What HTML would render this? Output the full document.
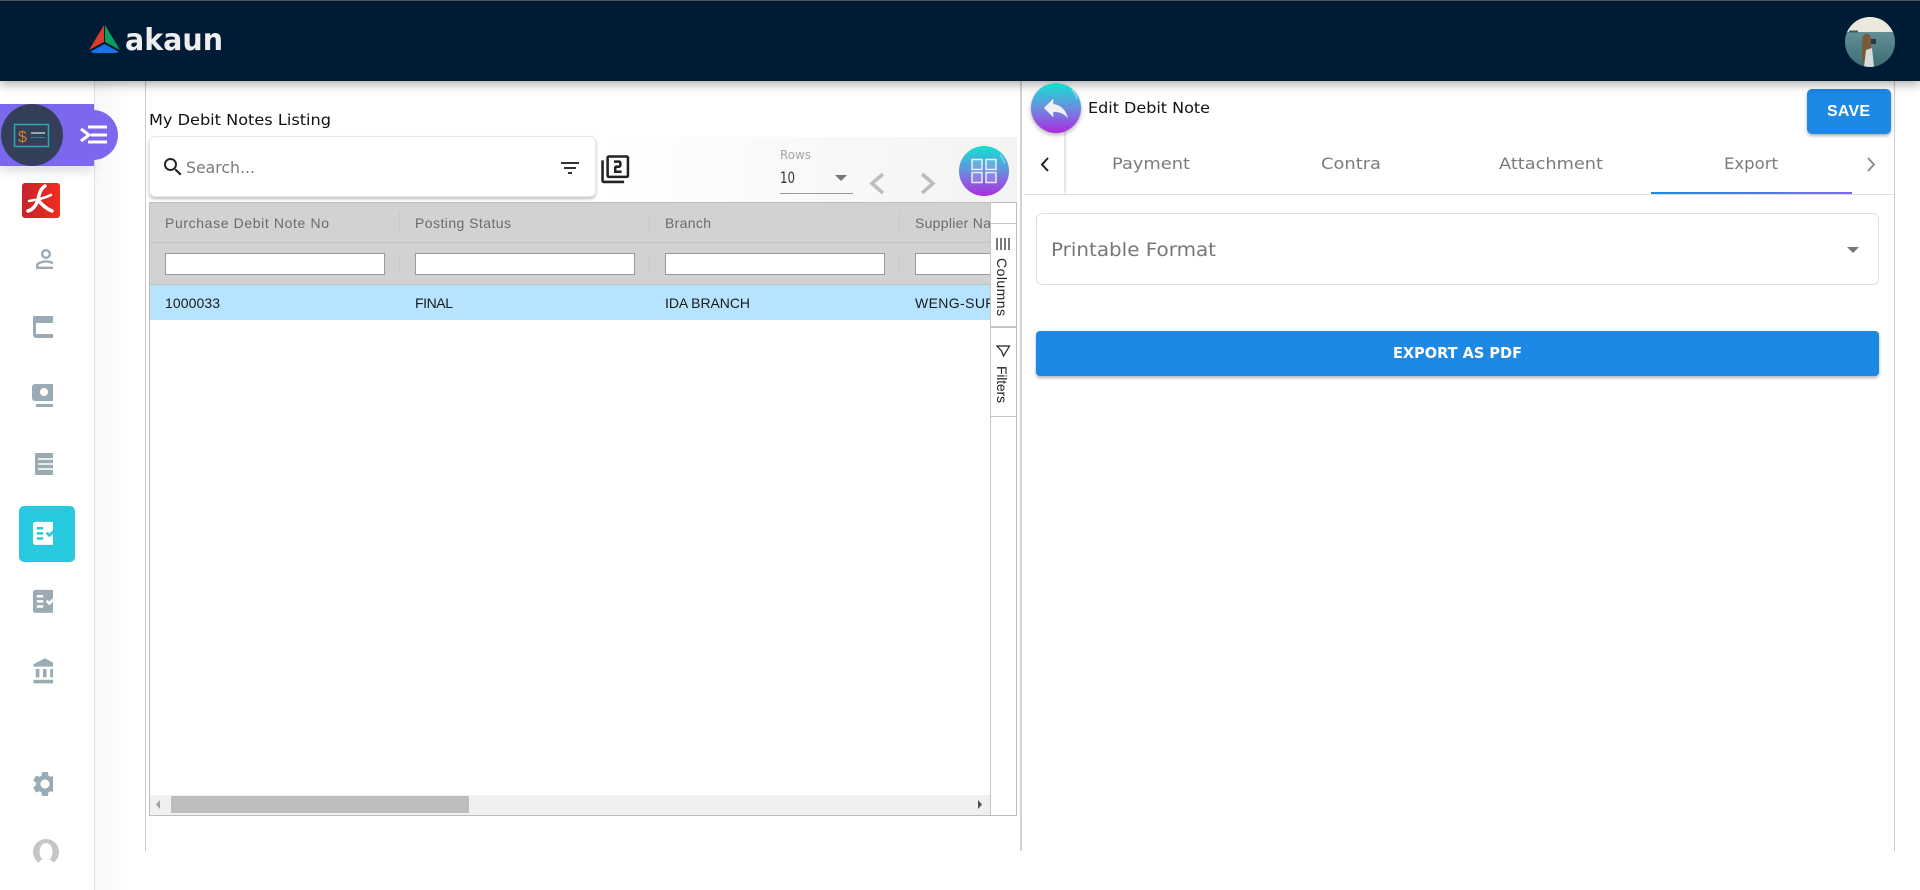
<!DOCTYPE html>
<html lang="en"><head><meta charset="utf-8"><title>Edit Debit Note</title>
<style>
html,body{margin:0;padding:0;width:1920px;height:890px;overflow:hidden;background:#fff;font-family:"Liberation Sans",sans-serif}
.a{position:absolute;box-sizing:border-box}
svg text{font-family:"Liberation Sans",sans-serif}
svg .p{font-family:"DejaVu Sans",sans-serif}
</style></head><body>
<div class="a" style="left:95px;top:81px;width:50px;height:809px;background:linear-gradient(90deg,#f8f8f8,#fff 70%)"></div>
<div class="a" style="left:94px;top:81px;width:1px;height:809px;background:#e2e2e2"></div>
<div class="a" style="left:145px;top:81px;width:1px;height:770px;background:#ccc"></div>
<div class="a" style="left:1020px;top:81px;width:2px;height:770px;background:#d2d2d2"></div>
<div class="a" style="left:1894px;top:81px;width:1px;height:770px;background:#ccc"></div>
<div class="a" style="left:600px;top:137px;width:417px;height:65px;background:linear-gradient(90deg,#fff,#f3f3f3)"></div>
<!-- sidebar -->
<div class="a" style="left:0;top:104px;width:94px;height:62px;background:#7b68ee;box-shadow:0 6px 10px rgba(0,0,0,.12)"></div>
<div class="a" style="left:60px;top:110px;width:58px;height:50px;background:#7b68ee;border-radius:0 25px 25px 0"></div>
<div class="a" style="left:1px;top:104px;width:62px;height:62px;background:#34405a;border-radius:50%"></div>
<div class="a" style="left:19px;top:506px;width:56px;height:56px;background:#26c9de;border-radius:5px"></div>
<!-- search -->
<div class="a" style="left:149px;top:136px;width:447px;height:61px;background:#fff;border:1px solid #e8e8e8;border-radius:6px;box-shadow:0 2px 3px rgba(0,0,0,.25)"></div>
<!-- grid -->
<div class="a" style="left:149px;top:202px;width:868px;height:614px;border:1px solid #bdbdbd;background:#fff"></div>
<div class="a" style="left:150px;top:203px;width:840px;height:40px;background:#d2d2d2;border-bottom:1px solid #c2c2c2"></div>
<div class="a" style="left:150px;top:243px;width:840px;height:42px;background:#d2d2d2;border-bottom:1px solid #c2c2c2"></div>
<div class="a" style="left:150px;top:285px;width:840px;height:35px;background:#b6e3fe"></div>
<div class="a" style="left:399px;top:213px;width:1px;height:20px;background:#c4c8cc"></div>
<div class="a" style="left:649px;top:213px;width:1px;height:20px;background:#c4c8cc"></div>
<div class="a" style="left:899px;top:213px;width:1px;height:20px;background:#c4c8cc"></div>
<div class="a" style="left:399px;top:254px;width:1px;height:20px;background:#c4c8cc"></div>
<div class="a" style="left:649px;top:254px;width:1px;height:20px;background:#c4c8cc"></div>
<div class="a" style="left:899px;top:254px;width:1px;height:20px;background:#c4c8cc"></div>
<div class="a" style="left:165px;top:253px;width:220px;height:22px;background:#fff;border:1px solid #8f9d9d"></div>
<div class="a" style="left:415px;top:253px;width:220px;height:22px;background:#fff;border:1px solid #8f9d9d"></div>
<div class="a" style="left:665px;top:253px;width:220px;height:22px;background:#fff;border:1px solid #8f9d9d"></div>
<div class="a" style="left:915px;top:253px;width:75px;height:22px;background:#fff;border:1px solid #8f9d9d;border-right:0"></div>
<div class="a" style="left:990px;top:203px;width:26px;height:612px;background:#fff;border-left:1px solid #c6c6c6"></div>
<div class="a" style="left:991px;top:223px;width:25px;height:1px;background:#c6c6c6"></div>
<div class="a" style="left:991px;top:326px;width:25px;height:2px;background:#c6c6c6"></div>
<div class="a" style="left:991px;top:416px;width:25px;height:1px;background:#c6c6c6"></div>
<div class="a" style="left:150px;top:795px;width:840px;height:20px;background:#f0f0f0"></div>
<div class="a" style="left:171px;top:796px;width:298px;height:17px;background:#bebebe"></div>
<!-- right -->
<div class="a" style="left:1024px;top:194px;width:870px;height:1px;background:#e0e0e0"></div>
<div class="a" style="left:1024px;top:130px;width:40px;height:64px;background:#fff;box-shadow:2px 0 3px -1px rgba(0,0,0,.2);clip-path:inset(0 -6px 0 0)"></div>
<div class="a" style="left:1651px;top:192px;width:201px;height:2px;background:linear-gradient(90deg,#1e88e5,#7b68ee)"></div>
<div class="a" style="left:1036px;top:213px;width:843px;height:72px;border:1px solid #e0e0e0;border-radius:6px"></div>
<div class="a" style="left:1036px;top:331px;width:843px;height:45px;background:#1e88e5;border-radius:4px;box-shadow:0 2px 3px rgba(0,0,0,.3)"></div>
<div class="a" style="left:1807px;top:89px;width:84px;height:45px;background:#1e88e5;border-radius:5px;box-shadow:0 2px 3px rgba(0,0,0,.3)"></div>
<!-- header -->
<div class="a" style="left:0;top:0;width:1920px;height:81px;background:#001b35;border-top:1px solid #555;box-shadow:0 3px 10px rgba(0,0,0,.35)"></div>

<svg class="a" style="left:0;top:0" width="1920" height="890" viewBox="0 0 1920 890">
<defs>
<linearGradient id="g" x1="0" y1="0" x2="0" y2="1"><stop offset="0" stop-color="#10e2cf"/><stop offset=".5" stop-color="#6a8ee0"/><stop offset="1" stop-color="#ad2be0"/></linearGradient>
<linearGradient id="red" x1="0" y1="0" x2="1" y2="0"><stop offset="0" stop-color="#c4252c"/><stop offset="1" stop-color="#f02d1e"/></linearGradient>
<linearGradient id="sea" x1="0" y1="0" x2="0" y2="1"><stop offset="0" stop-color="#6f9ea3"/><stop offset="1" stop-color="#3e6e74"/></linearGradient>
<clipPath id="ic"><rect x="0" y="0" width="53" height="890"/></clipPath>
<clipPath id="gc"><rect x="150" y="200" width="840" height="130"/></clipPath>
<clipPath id="av"><circle cx="1870" cy="42" r="25"/></clipPath>
</defs>

<!-- logo -->
<polygon points="104,25 89,50 104,42" fill="#d83c2c"/>
<polygon points="105,25 120,50 105,42" fill="#0a9f5a"/>
<polygon points="104.5,44 90,52 94,53 115,53 119,52" fill="#1a73e8"/>
<text class="p" x="125" y="50" font-size="30" font-weight="700" fill="#eee" textLength="98" lengthAdjust="spacingAndGlyphs">akaun</text>
<!-- avatar -->
<g clip-path="url(#av)"><rect x="1845" y="17" width="50" height="50" fill="url(#sea)"/>
<rect x="1845" y="17" width="50" height="15" fill="#ece8dc"/>
<rect x="1849" y="30.500" width="9" height="2" fill="#3e5a5c"/>
<path d="M1862 42c0-6 3-9 6-8 2 1 3 3 3 6v8l-3 6-2 8h-4z" fill="#7a5a3a"/>
<path d="M1866 50l6-2 2 19h-10z" fill="#d5dcdc"/><rect x="1871" y="39" width="5" height="5" fill="#2c3837"/></g>
<!-- top-left widget -->
<rect x="14.500" y="124.500" width="34" height="22" fill="none" stroke="#2fa5ac" stroke-width="1.500"/>
<text x="18" y="142" font-size="16" fill="#c9802a">$</text>
<rect x="31" y="132" width="14" height="2" fill="#9aa5ad"/>
<line x1="31" y1="137.500" x2="45" y2="137.500" stroke="#2fa5ac" stroke-dasharray="1.500 .7"/>
<path d="M81 129l8 6-8 6" fill="none" stroke="#fff" stroke-width="3"/>
<path d="M88 127h19M91 135h16M88 142h19" stroke="#fff" stroke-width="3"/>
<!-- acrobat -->
<rect x="22" y="183" width="38" height="35" rx="3" fill="url(#red)"/>
<g fill="none" stroke="#fff" stroke-linecap="round"><path stroke-width="3.500" d="M45 186C40 189 39 195 38 200C36 206 32 210 28 211"/><path stroke-width="2.500" d="M29 201C36 200 45 198 51 195"/><path stroke-width="3.500" d="M39 201C43 206 47 209 52 211"/></g>
<!-- sidebar icons -->
<g clip-path="url(#ic)" fill="#9aabb5">
<path transform="translate(31,244) scale(1.25)" d="M12 5.900c1.160 0 2.100.94 2.100 2.100s-.94 2.100-2.100 2.100S9.900 9.160 9.900 8s.94-2.100 2.100-2.100m0 9c2.970 0 6.100 1.460 6.100 2.100v1.100H5.900V17c0-.64 3.130-2.100 6.100-2.100M12 4C9.790 4 8 5.790 8 8s1.790 4 4 4 4-1.790 4-4-1.790-4-4-4zm0 9c-2.670 0-8 1.340-8 4v3h16v-3c0-2.660-5.330-4-8-4z"/>
<path fill-rule="evenodd" d="M36 316h20a2 2 0 0 1 2 2v18a2 2 0 0 1-2 2H36a3 3 0 0 1-3-3v-17a2 2 0 0 1 3-2zm0 7v11h20v-11z"/>
<path fill-rule="evenodd" d="M35 384h22v17H35a3 3 0 0 1-3-3v-11a3 3 0 0 1 3-3zm9 4a4 4 0 1 0 .01 0z"/><rect x="36" y="404" width="20" height="3"/>
<path d="M35 453h22v22H35z"/><path d="M38 459h18M38 464h18M38 469h18" stroke="#fff" stroke-width="1.500"/>
<path transform="translate(30.400,586) scale(1.28)" d="M20 3H4c-1.100 0-2 .9-2 2v14c0 1.100.9 2 2 2h16c1.100 0 2-.9 2-2V5c0-1.100-.9-2-2-2zM10 17H5v-2h5v2zm0-4H5v-2h5v2zm0-4H5V7h5v2zm4.820 6L12 12.160l1.410-1.410 1.410 1.420L17.990 9l1.420 1.420L14.820 15z"/>
<path transform="translate(31,657) scale(1.2)" d="M4 10v7h3v-7H4zm6 0v7h3v-7h-3zM2 22h19v-3H2v3zm14-12v7h3v-7h-3zm-4.500-9L2 6v2h19V6l-9.500-5z"/>
<path transform="translate(30,769) scale(1.25)" d="M19.140 12.940c.04-.3.06-.61.06-.94 0-.32-.02-.64-.07-.94l2.030-1.580c.18-.14.23-.41.12-.61l-1.920-3.320c-.12-.22-.37-.29-.59-.22l-2.390.96c-.5-.38-1.030-.7-1.620-.94l-.36-2.540c-.04-.24-.24-.41-.48-.41h-3.840c-.24 0-.43.17-.47.41l-.36 2.540c-.59.24-1.130.57-1.620.94l-2.390-.96c-.22-.08-.47 0-.59.22L2.740 8.870c-.12.21-.08.47.12.61l2.030 1.580c-.05.3-.09.63-.09.94s.02.64.07.94l-2.030 1.580c-.18.14-.23.41-.12.61l1.920 3.320c.12.22.37.29.59.22l2.390-.96c.5.38 1.030.7 1.620.94l.36 2.540c.05.24.24.41.48.41h3.840c.24 0 .44-.17.47-.41l.36-2.540c.59-.24 1.130-.56 1.620-.94l2.390.96c.22.08.47 0 .59-.22l1.920-3.320c.12-.22.07-.47-.12-.61l-2.010-1.580zM12 15.600c-1.980 0-3.600-1.620-3.600-3.600s1.620-3.600 3.600-3.600 3.600 1.620 3.600 3.600-1.620 3.600-3.600 3.600z"/>
</g>
<g clip-path="url(#ic)"><path transform="translate(30.400,518) scale(1.28)" fill="#fff" d="M20 3H4c-1.100 0-2 .9-2 2v14c0 1.100.9 2 2 2h16c1.100 0 2-.9 2-2V5c0-1.100-.9-2-2-2zM10 17H5v-2h5v2zm0-4H5v-2h5v2zm0-4H5V7h5v2zm4.820 6L12 12.160l1.410-1.410 1.410 1.420L17.990 9l1.420 1.420L14.820 15z"/></g>
<circle cx="46" cy="852" r="13" fill="#c6c6c6"/><ellipse cx="46" cy="852" rx="6.500" ry="9" fill="#fff"/><path d="M41 860h10l6 6H35z" fill="#fff"/>
<!-- left panel text -->
<text class="p" x="149" y="125" font-size="15" fill="#111" textLength="182" lengthAdjust="spacingAndGlyphs">My Debit Notes Listing</text>
<path transform="translate(161,155) scale(1)" fill="#222" d="M15.500 14h-.79l-.28-.27A6.471 6.471 0 0 0 16 9.500 6.500 6.500 0 1 0 9.500 16c1.610 0 3.090-.59 4.230-1.570l.27.28v.79l5 4.990L20.490 19l-4.990-5zm-6 0C7.010 14 5 11.990 5 9.500S7.010 5 9.500 5 14 7.010 14 9.500 11.990 14 9.500 14z"/>
<text class="p" x="186" y="173" font-size="16" fill="#7a7a7a" textLength="69" lengthAdjust="spacingAndGlyphs">Search...</text>
<path transform="translate(558,156)" fill="#333" d="M10 18h4v-2h-4v2zM3 6v2h18V6H3zm3 7h12v-2H6v2z"/>
<path transform="translate(600,154) scale(1.27)" fill="#222" d="M3 5H1v16c0 1.100.9 2 2 2h16v-2H3V5zm18-4H7c-1.100 0-2 .9-2 2v14c0 1.100.9 2 2 2h14c1.100 0 2-.9 2-2V3c0-1.100-.9-2-2-2zm0 16H7V3h14v14zm-4-4h-4v-2h2c1.100 0 2-.89 2-2V7c0-1.110-.9-2-2-2h-4v2h4v2h-2c-1.100 0-2 .89-2 2v4h6v-2z"/>
<text class="p" x="780" y="159" font-size="12" fill="#a5a5a5" textLength="31" lengthAdjust="spacingAndGlyphs">Rows</text>
<text class="p" x="780" y="183" font-size="16" fill="#333" textLength="15" lengthAdjust="spacingAndGlyphs">10</text>
<rect x="780" y="193" width="73" height="1" fill="#999"/>
<polygon points="835,175 847,175 841,181" fill="#777"/>
<path d="M883 174l-11 9.500 11 9.500" fill="none" stroke="#bdbdbd" stroke-width="3.500"/>
<path d="M922 174l11 9.500-11 9.500" fill="none" stroke="#bdbdbd" stroke-width="3.500"/>
<circle cx="984" cy="171" r="25" fill="url(#g)"/>
<path d="M1000 155a23 23 0 0 1 5 9" fill="none" stroke="#fff" stroke-opacity=".5"/>
<g fill="#fff" fill-opacity=".12" stroke="#fff" stroke-opacity=".85" stroke-width="1.500"><rect x="972" y="159.500" width="10" height="10"/><rect x="986" y="159.500" width="10" height="10"/><rect x="972" y="172.500" width="10" height="10"/><rect x="986" y="172.500" width="10" height="10"/></g>
<!-- grid text -->
<g font-size="14" fill="#6b6b6b">
<text x="165" y="228" textLength="164">Purchase Debit Note No</text>
<text x="415" y="228" textLength="96">Posting Status</text>
<text x="665" y="228" textLength="46">Branch</text>
</g>
<g clip-path="url(#gc)">
<text x="915" y="228" font-size="14" fill="#6b6b6b" textLength="96">Supplier Name</text>
<text x="915" y="308" font-size="14" fill="#1a1a1a" textLength="122">WENG-SUPPLIER</text>
</g>
<g font-size="14" fill="#1a1a1a">
<text x="165" y="308" textLength="55">1000033</text>
<text x="415" y="308" textLength="38">FINAL</text>
<text x="665" y="308" textLength="85">IDA BRANCH</text>
</g>
<path d="M997 238v12M1001 238v12M1005 238v12M1009 238v12" stroke="#333" stroke-width="1.300"/>
<text transform="translate(997,258) rotate(90)" font-size="14" fill="#222" textLength="58">Columns</text>
<path d="M997 346h12.500l-6 10-2-5z" fill="none" stroke="#222" stroke-width="1.200"/>
<text transform="translate(997,366) rotate(90)" font-size="14" fill="#222" textLength="37">Filters</text>
<polygon points="156,804.500 160,800 160,809" fill="#a0a0a0"/>
<polygon points="978,800 978,809 982,804.500" fill="#505050"/>
<!-- right panel -->
<circle cx="1056" cy="108" r="25" fill="url(#g)" style="filter:drop-shadow(0 2px 2px rgba(0,0,0,.3))"/>
<path d="M1072 90a23 23 0 0 1 5 9" fill="none" stroke="#fff" stroke-opacity=".5"/>
<path transform="translate(1040,92) scale(1.33)" fill="#f1f1f1" d="M10 9V5l-7 7 7 7v-4.100c5 0 8.500 1.600 11 5.100-1-5-4-10-11-11z"/>
<text class="p" x="1088" y="113" font-size="15" fill="#111" textLength="122" lengthAdjust="spacingAndGlyphs">Edit Debit Note</text>
<path d="M1048 158l-6 6.500 6 6.500" fill="none" stroke="#222" stroke-width="2"/>
<g class="p" font-size="16" fill="#7b7b7b">
<text class="p" x="1112" y="169" textLength="78" lengthAdjust="spacingAndGlyphs">Payment</text>
<text class="p" x="1321" y="169" textLength="60" lengthAdjust="spacingAndGlyphs">Contra</text>
<text class="p" x="1499" y="169" textLength="104" lengthAdjust="spacingAndGlyphs">Attachment</text>
<text class="p" x="1724" y="169" textLength="54" lengthAdjust="spacingAndGlyphs">Export</text>
</g>
<path d="M1868 158l6 6.500-6 6.500" fill="none" stroke="#888" stroke-width="1.800"/>
<text class="p" x="1051" y="256" font-size="19" fill="#777" textLength="165" lengthAdjust="spacingAndGlyphs">Printable Format</text>
<polygon points="1847,247 1859,247 1853,253" fill="#777"/>
<text class="p" x="1393" y="358" font-size="15" font-weight="700" fill="#fff" textLength="129" lengthAdjust="spacingAndGlyphs">EXPORT AS PDF</text>
<text x="1827" y="116" font-size="16" font-weight="700" fill="#fff" textLength="43">SAVE</text>
</svg>
</body></html>
